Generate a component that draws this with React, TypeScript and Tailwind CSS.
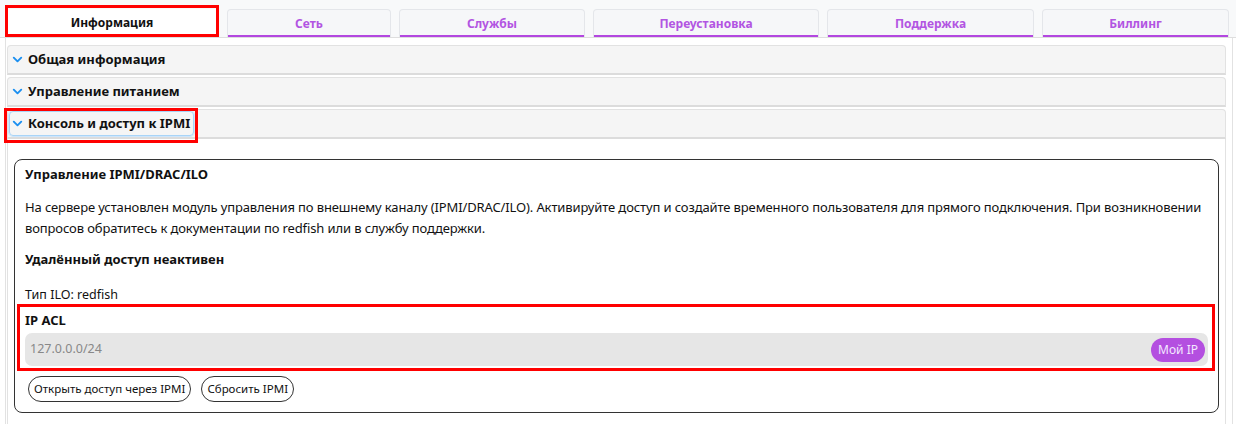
import { ChevronDown } from 'lucide-react';

const tabs = [
  { label: 'Информация', width: 'w-[214px]', active: true },
  { label: 'Сеть', width: 'w-[164px]' },
  { label: 'Службы', width: 'w-[186px]' },
  { label: 'Переустановка', width: 'w-[226px]' },
  { label: 'Поддержка', width: 'w-[207px]' },
  { label: 'Биллинг', width: 'w-[187px]' },
];

function Tabs() {
  return (
    <div className="flex gap-[8px] bg-[#f8f9fa] pl-[5px] pt-[9px] border-b border-[#dedede]">
      {tabs.map((tab) =>
        tab.active ? (
          <div
            key={tab.label}
            className={`${tab.width} h-[28px] flex items-center justify-center bg-white text-[12px] font-bold text-[#111]`}
          >
            {tab.label}
          </div>
        ) : (
          <div
            key={tab.label}
            className={`${tab.width} h-[28px] flex items-center justify-center rounded-t-[4px] border border-b-0 border-[#e4e6ea] bg-[#f6f7f9] text-[12px] font-bold text-[#b255e2] shadow-[inset_0_-2px_0_#b347e0]`}
          >
            {tab.label}
          </div>
        ),
      )}
    </div>
  );
}

function AccordionHeader({ title, focused }: { title: string; focused?: boolean }) {
  return (
    <div className="h-[30px] flex items-center rounded-t-[4px] border border-[#e2e2e2] border-b-2 border-b-[#dcdcdc] bg-[#f5f5f5] pl-[1px]">
      <div
        className={
          focused
            ? 'flex items-center gap-[3px] h-[25px] pl-[0px] pr-[3px] rounded-[4px] border border-[#a9d4f7] shadow-[0_0_0_1px_#cfe6fb]'
            : 'flex items-center gap-[3px] h-[25px] pl-[0px] pr-[3px] border border-transparent'
        }
      >
        <ChevronDown className="w-[15px] h-[15px] text-[#1b8ff0]" strokeWidth={3} />
        <span className="text-[13px] font-bold text-[#111]">{title}</span>
      </div>
    </div>
  );
}

function IpmiCard() {
  return (
    <div className="rounded-[8px] border border-[#333] px-[10px] pt-[3px] pb-[10px] text-[#111]">
      <div className="text-[13px] font-bold leading-[22px]">Управление IPMI/DRAC/ILO</div>
      <p className="mt-[12px] text-[13px] leading-[21px] tracking-[-0.12px]">
        На сервере установлен модуль управления по внешнему каналу (IPMI/DRAC/ILO). Активируйте доступ и создайте
        временного пользователя для прямого подключения. При возникновении вопросов обратитесь к документации по
        redfish или в службу поддержки.
      </p>
      <div className="mt-[9px] text-[13px] font-bold leading-[22px]">Удалённый доступ неактивен</div>
      <div className="mt-[14px] text-[12.5px] leading-[22px]">Тип ILO: redfish</div>
      <div className="mt-[3px] text-[13px] font-bold leading-[22px]">IP ACL</div>
      <div className="mt-[2px] h-[33px] flex items-center justify-between rounded-[7px] bg-[#e6e6e6] pl-[5px] pr-[3px]">
        <span className="text-[12.5px] text-[#888]">127.0.0.0/24</span>
        <button className="h-[24px] px-[7px] rounded-full bg-[#b44fe0] text-[12px] text-[#f3e8ff]">Мой IP</button>
      </div>
      <div className="mt-[10px] flex gap-[10px] pl-[3px]">
        <button className="h-[26px] px-[5px] rounded-full border border-[#333] text-[11.5px] text-[#111]">
          Открыть доступ через IPMI
        </button>
        <button className="h-[26px] px-[5px] rounded-full border border-[#333] text-[11.5px] text-[#111]">
          Сбросить IPMI
        </button>
      </div>
    </div>
  );
}

export default function App() {
  return (
    <div className="relative h-[424px] bg-white font-['Noto_Sans',sans-serif]">
      <Tabs />
      <div className="mx-[5px] mr-[3px] border-x border-[#e2e2e2] pt-[7px] pl-[1px] pr-[6px] h-[387px]">
        <div className="flex flex-col gap-[2px]">
          <AccordionHeader title="Общая информация" />
          <AccordionHeader title="Управление питанием" />
          <div>
            <AccordionHeader title="Консоль и доступ к IPMI" focused />
            <div className="border-x border-[#e2e2e2] px-[6px] pt-[20px] pb-[10px] h-[290px]">
              <IpmiCard />
            </div>
          </div>
        </div>
      </div>

      {/* red annotation frames */}
      <div className="pointer-events-none absolute left-[5px] top-[5px] w-[214px] h-[32px] border-[3px] border-[#f00]" />
      <div className="pointer-events-none absolute left-[4px] top-[108px] w-[194px] h-[35px] border-[3px] border-[#f00]" />
      <div className="pointer-events-none absolute left-[17px] top-[304px] w-[1198px] h-[67px] border-[3px] border-[#f00]" />
    </div>
  );
}
